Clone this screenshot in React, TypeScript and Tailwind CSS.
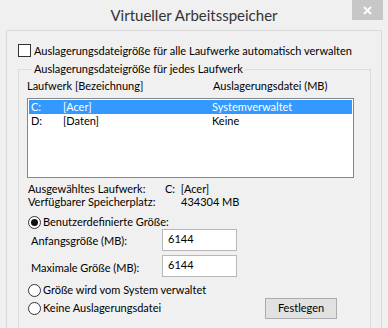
import React from "react"

const font = "font-['Lato','Noto_Sans',sans-serif]"

function Radio({ checked }: { checked?: boolean }) {
  return (
    <span className="w-[13px] h-[13px] rounded-full border border-[#333] bg-white flex items-center justify-center shrink-0">
      {checked && <span className="w-[7px] h-[7px] rounded-full bg-[#111]" />}
    </span>
  )
}

export default function App() {
  return (
    <div className={`w-[388px] h-[328px] overflow-hidden bg-[#f0f0f0] text-[11px] text-black ${font}`}>
      <div className="relative h-[30px] flex items-center justify-center text-[15px] text-[#333]">
        Virtueller Arbeitsspeicher
        <div className="absolute right-[5px] top-0 w-[31px] h-[20px] bg-[#c7c7c7] flex items-center justify-center">
          <svg width="9" height="9" viewBox="0 0 9 9">
            <path d="M1 1 L8 8 M8 1 L1 8" stroke="white" strokeWidth="1.8" />
          </svg>
        </div>
      </div>

      <div className="mx-[6px] h-[298px] border-x border-t border-[#dadada] pl-[11px] pr-[10px] pt-[13px]">
        <div className="flex items-center gap-[3px] h-[13px]">
          <span className="w-[13px] h-[13px] border border-[#333] bg-white shrink-0" />
          <span className="leading-[13px] whitespace-nowrap">Auslagerungsdateigröße für alle Laufwerke automatisch verwalten</span>
        </div>

        <fieldset className="mt-[5px] h-[268px] border border-[#dcdcdc] pl-[8px] pr-[16px]">
          <legend className="ml-[5px] px-[2px] leading-[14px]">Auslagerungsdateigröße für jedes Laufwerk</legend>

          <div className="flex h-[15px] items-center mt-[3px]">
            <span className="w-[186px]">Laufwerk [Bezeichnung]</span>
            <span>Auslagerungsdatei (MB)</span>
          </div>

          <div className="mt-[4px] h-[80px] border border-[#828790] bg-white">
            <div className="flex h-[14px] items-center bg-[#3399ff] text-white mx-px mt-px pl-[2px]">
              <span className="w-[32px]">C:</span>
              <span className="w-[149px]">[Acer]</span>
              <span>Systemverwaltet</span>
            </div>
            <div className="flex h-[14px] items-center pl-[3px]">
              <span className="w-[32px]">D:</span>
              <span className="w-[149px]">[Daten]</span>
              <span>Keine</span>
            </div>
          </div>

          <div className="mt-[5px] flex h-[13px] items-center pl-px">
            <span className="w-[137px]">Ausgewähltes Laufwerk:</span>
            <span>C:&nbsp;&nbsp;[Acer]</span>
          </div>
          <div className="flex h-[13px] items-center pl-px">
            <span className="w-[153px]">Verfügbarer Speicherplatz:</span>
            <span>434304 MB</span>
          </div>

          <div className="mt-[7px] flex h-[13px] items-center gap-[2px] pl-px">
            <Radio checked />
            <span>Benutzerdefinierte Größe:</span>
          </div>

          <div className="flex h-[22px] items-center pl-[4px]">
            <span className="w-[131px] pt-[2px]">Anfangsgröße (MB):</span>
            <div className="w-[75px] h-[22px] border border-[#b8b8b8] bg-white pl-[5px] flex items-center pb-[2px]">6144</div>
          </div>
          <div className="mt-[4px] flex h-[22px] items-center pl-[4px]">
            <span className="w-[131px] pt-[4px]">Maximale Größe (MB):</span>
            <div className="w-[75px] h-[22px] border border-[#b8b8b8] bg-white pl-[5px] flex items-center pb-[2px]">6144</div>
          </div>

          <div className="mt-[7px] flex h-[13px] items-center gap-[2px] pl-px">
            <Radio />
            <span>Größe wird vom System verwaltet</span>
          </div>

          <div className="flex items-start justify-between">
            <div className="mt-[5px] flex h-[13px] items-center gap-[2px] pl-px">
              <Radio />
              <span>Keine Auslagerungsdatei</span>
            </div>
            <button className="mt-[1px] mr-[17px] w-[72px] h-[21px] border border-[#acacac] bg-[#e1e1e1] flex items-center justify-center">
              Festlegen
            </button>
          </div>
        </fieldset>
      </div>
    </div>
  )
}
